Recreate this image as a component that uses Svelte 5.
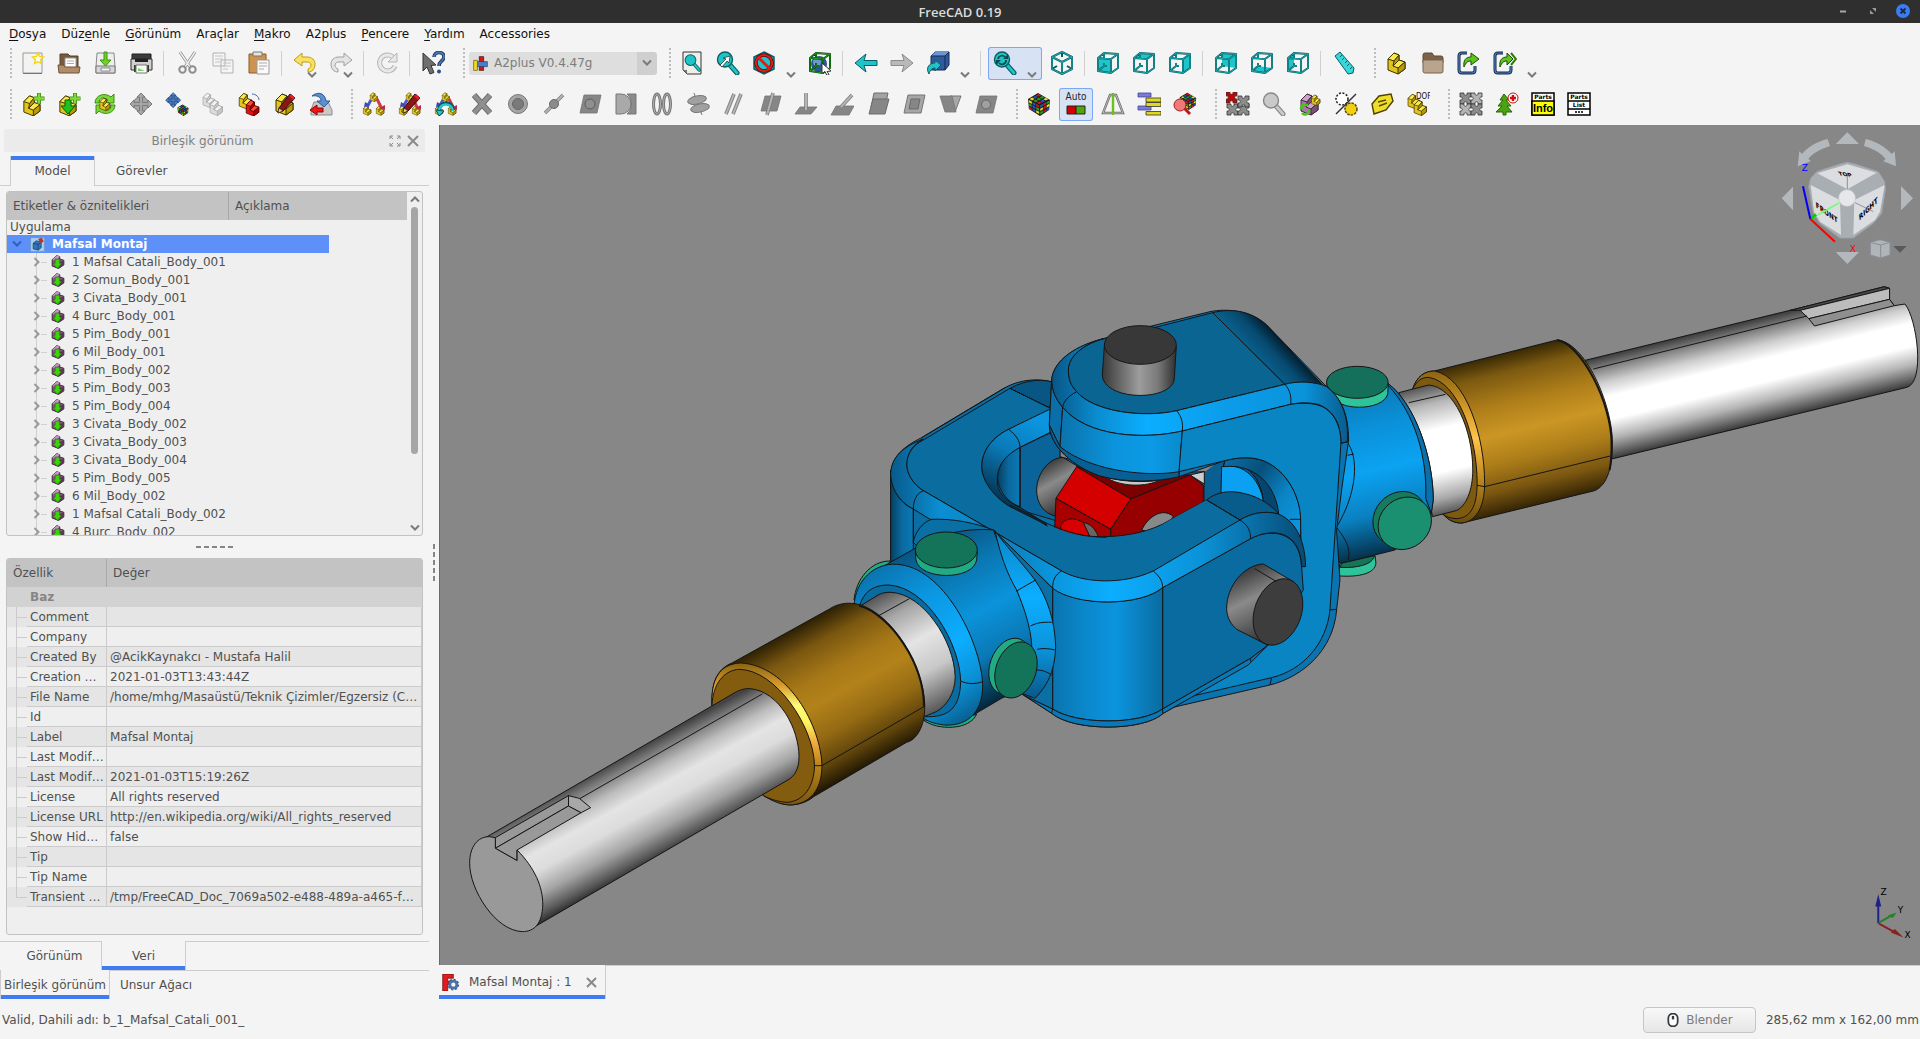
<script lang="ts">
	const teal = '#1fc4c8';
	const tealDark = '#0b5d61';

	function part(top: string, front: string, side: string, line = '#3a3300', transform = '') {
		return `<g transform="${transform}" stroke="${line}" stroke-linejoin="round">
			<path fill="${front}" d="M3 8l6-6 5 2v5l6 2v7l-7 5-10-4z"/>
			<path fill="${top}" d="M3 8l6-6 5 2-5 6zM8 15l6-6 6 2-7 6z"/>
			<path fill="${side}" d="M13 17l7-6v7l-7 5zM9 10l5-6v5l-6 6z"/></g>`;
	}

	const yellow = (t = '') => part('#fbe94a', '#e3c41c', '#b99a08', '#3a3300', t);
	const grey = (t = '') => part('#f2f2f2', '#dcdcdc', '#c8c8c8', '#a4a4a4', t);
	const red = (t = '') => part('#ff4a3a', '#e01010', '#b00000', '#4a0000', t);

	const faces: Record<string, string> = {
		front: '2,7 15,8 15,22 2,20',
		top: '2,7 8,2 22,3 15,8',
		right: '15,8 22,3 22,17 15,22',
		rear: '8,2 22,3 22,17 8,15',
		bottom: '2,20 8,15 22,17 15,22',
		left: '2,7 8,2 8,15 2,20'
	};

	function cube(face: string, line = tealDark, light = teal) {
		const edges = 'M2 7l13 1v14L2 20zM2 7l6-5 14 1-7 5M22 3v14l-7 5M8 2v5M8 12v3l3 0M8 15l-6 5';
		return `<polygon points="${faces[face] ?? ''}" fill="${light}"/>
			<path d="${edges}" fill="none" stroke="${line}" stroke-width="2" stroke-linejoin="round"/>
			<path d="${edges}" fill="none" stroke="${light}" stroke-width=".7"/>`;
	}

	function lens(fill: string, line: string, transform = '') {
		return `<g transform="${transform}"><path d="M14 14l7 8" stroke="${line}" stroke-width="5" stroke-linecap="round"/>
			<path d="M14 14l7 8" stroke="${fill}" stroke-width="2.8" stroke-linecap="round"/>
			<circle cx="9" cy="8.500" r="7.500" fill="${fill}" stroke="${line}" stroke-width="1.400"/></g>`;
	}

	function rubik(transform = '') {
		const cols = ['#e8d820', '#1f55c4', '#d01818', '#2a9c22'];
		let s = `<g transform="${transform}"><path d="M11 1l12 7-1 10-9 6-11-7-1-10z" fill="#1b1b1b"/>`;
		for (let i = 0; i < 3; i++) {
			for (let j = 0; j < 3; j++) {
				const c = (k: number) => cols[(i * 5 + j * 3 + k + i * j) % 4];
				s += `<path fill="${c(0)}" d="M${1.8 + i * 3.7} ${8 + i * 1.9 + j * 3.2}l3 1.6v2.3l-3-1.6z"/>`;
				s += `<path fill="${c(1)}" d="M${13.2 + i * 3.2} ${13.3 - i * 1.7 + j * 3.4}l2.7-1.5v2.3l-2.7 1.6z"/>`;
				s += `<path fill="${c(2)}" d="M${11.5 + i * 3.6 - j * 3.2} ${2 + i * 1.9 + j * 1.8}l2.6 1.4-2.6 1.4-2.5-1.4z"/>`;
			}
		}
		return s + '</g>';
	}

	const plane = (d: string) => `<path d="${d}" fill="#868686" stroke="#747474" stroke-width=".8"/>`;
	const rod = (d: string) =>
		`<path d="${d}" stroke="#7d7d7d" stroke-width="3.6" fill="none"/><path d="${d}" stroke="#b4b4b4" stroke-width="2" fill="none"/>`;
	const pencil = `<path d="M5 21l1-5L17 2l5 4-12 13z" fill="#8d1418" stroke="#2a0808"/><path d="M5 21l1-5 4 3z" fill="#e8cf90" stroke="#222" stroke-width=".6"/><path d="M16 4l4 4 2-2-4-4z" fill="#d22"/>`;
	const plus = `<path d="M18 1v11M12.500 6.500h11" stroke="#3f8f0c" stroke-width="4"/><path d="M18 1.500v10M13 6.500h10" stroke="#7fd938" stroke-width="2.400"/>`;
	const triad = `${yellow('translate(7 0) scale(.42)')}${yellow('translate(0 13) scale(.45)')}${yellow('translate(13 13) scale(.45)')}
		<path d="M9 8l-4 7" stroke="#5058c8" stroke-width="3"/><path d="M15 7l4 8" stroke="#cc3a4c" stroke-width="3"/><path d="M2 15l1-5 5 3z" fill="#4048b8"/><path d="M17 16l6-3v5z" fill="#b82c48"/>`;
	const movecross = (c: string, l: string) =>
		`<circle cx="12" cy="12" r="7.500" fill="${c}" stroke="${l}"/><path d="M12 1l4 4h-2.500v5.500H19V8l4 4-4 4v-2.500h-5.500V19H16l-4 4-4-4h2.500v-5.500H5V16l-4-4 4-4v2.500h5.500V5H8z" fill="${c}" stroke="${l}"/>`;
	const arrow = (c: string, l: string) =>
		`<path d="M1 12L12 3l-2 6.500h13v5H10l2 6.500z" fill="${c}" stroke="${l}" stroke-linejoin="round"/>`;
	const puzzle = (c: string, x: number, y: number) =>
		`<path transform="translate(${x} ${y})" d="M0 0h4c-1 3 4 3 3 0h4v4c-3-1-3 4 0 3v4H7c1-3-4-3-3 0H0V7c3 1 3-4 0-3z" fill="${c}" stroke="#333" stroke-width=".8"/>`;
	const exportBox = (x: number) =>
		`<path d="M10 2H5Q2 2 2 5v14q0 3 3 3h10q3 0 3-3v-4" fill="none" stroke="#14294a" stroke-width="3"/><path d="M10 2H5Q2 2 2 5v14q0 3 3 3h10q3 0 3-3v-4" fill="none" stroke="#4a7cc0" stroke-width="1.200"/>
		<path d="M7 16C6 9 9 6 14 6V2l${x} 6-${x} 6v-4c-3 0-5 1-7 6z" fill="#5cc41c" stroke="#1d4a05"/>`;

	const icons: Record<string, string> = {
		new: `<path d="M2 2h19v20H2z" fill="#f3f3f1" stroke="#9b9b98"/><path d="M2 22.500h19" stroke="#777" stroke-width="1"/><path d="M17 2l1.700 3.400 3.800.6-2.800 2.700.7 3.800L17 10.700l-3.400 1.800.7-3.800L11.500 6l3.800-.6z" fill="#fffde0" stroke="#f2d21a" stroke-width="1.400"/>`,
		open: `<path d="M3 3h8l2 2h8v12H3z" fill="#7a5a3c" stroke="#55402c"/><path d="M8 7h11v11H8z" fill="#fff" stroke="#999"/><path d="M10 10h7M10 12.500h7" stroke="#aaa"/><path d="M1 14h5l2 2h15l-1 6H2z" fill="#b08c68" stroke="#6e5238"/>`,
		save: `<path d="M4 2h17l1 14v6H3v-6z" fill="#eee" stroke="#888"/><path d="M3 15h19v7H3z" fill="#d8d8d8" stroke="#777"/><path d="M8 17h9v3H8z" fill="#f8f8f8" stroke="#888"/><path d="M11 1h3v8h4l-5.500 6L7 9h4z" fill="#6fd02a" stroke="#3f960a"/>`,
		print: `<path d="M3 3h19v5H3z" fill="#3c3c3c" stroke="#1d1d1d"/><path d="M2 8h21v11H2z" fill="#d0d0ce" stroke="#333"/><path d="M6 8h13v3H6z" fill="#222"/><path d="M5 14h15v7H5z" fill="#3a3a3a"/><path d="M7 14h11v8H7z" fill="#f8fff4" stroke="#777"/><path d="M9 17l7 3h-7z" fill="#7ccf62"/>`,
		cut: `<path d="M5 1l10 15M20 1L10 16" stroke="#8c8c8c" stroke-width="3"/><path d="M5 1l10 15M20 1L10 16" stroke="#efefef" stroke-width="1.400"/><circle cx="7.500" cy="18.500" r="3.200" fill="none" stroke="#8d8d8d" stroke-width="2"/><circle cx="17.500" cy="18.500" r="3.200" fill="none" stroke="#8d8d8d" stroke-width="2"/>`,
		copy: `<path d="M2 2h12v13H2zM10 9h12v13H10z" fill="#f5f5f5" stroke="#b2b2b2"/><path d="M4 5h8M4 8h8M4 11h5M12 12h8M12 15h8M12 18h5" stroke="#c4c4c4"/>`,
		paste: `<path d="M2 3h17v19H2z" fill="#cf9350" stroke="#8a5a22"/><path d="M6 1h9v4H6z" fill="#e4e4e2" stroke="#777"/><path d="M10 9h12v14H10z" fill="#fafafa" stroke="#999"/><path d="M12 12h8M12 15h8M12 18h5" stroke="#aaa"/>`,
		undo: `<path d="M1 9l8-7v4h5c5 0 8 3 8 7 0 5-3 8-7 8v-3c2-1 3-2 3-4s-2-3-4-3H9v4z" fill="#f7e264" stroke="#c49a0c"/>`,
		redo: `<path d="M23 9l-8-7v4h-5c-5 0-8 3-8 7 0 5 3 8 7 8v-3c-2-1-3-2-3-4s2-3 4-3h5v4z" fill="#e4e4e4" stroke="#9f9f9f"/>`,
		refresh: `<path d="M20 15a8 8 0 1 1-2-9" fill="none" stroke="#b5b5b5" stroke-width="5"/><path d="M20 15a8 8 0 1 1-2-9" fill="none" stroke="#e8e8e8" stroke-width="3"/><path d="M22 2v9h-9z" fill="#e8e8e8" stroke="#b5b5b5"/>`,
		whats: `<path d="M2 2l13 12-5 .5 3 7-4 1.500-3-7-4 4z" fill="#6d706d" stroke="#333"/><path d="M13 6c0-6 10-6 10 0 0 4-5 4-5 9" fill="none" stroke="#1c3557" stroke-width="3.600"/><path d="M13 6c0-6 10-6 10 0 0 4-5 4-5 9" fill="none" stroke="#4b78b5" stroke-width="1.800"/><circle cx="18" cy="20.500" r="2" fill="#2c4f80"/>`,
		fitall: `<path d="M3 1h18v22H7l-4-4z" fill="#efefea" stroke="#333"/><path d="M3 19h4v4z" fill="#777"/>${lens(teal, tealDark, 'translate(4 3) scale(.72)')}`,
		fitsel: `${lens(teal, tealDark)}<path d="M4 14l6-6-3-1 7-2-1 7-2-2-5 6z" fill="#fff" stroke="#222" stroke-width=".7"/>`,
		style: `<path d="M12 1l10 5v12l-10 5-10-5V6z" fill="${teal}" stroke="${tealDark}" stroke-width="1.500"/><circle cx="12" cy="12" r="8" fill="none" stroke="#5a0508" stroke-width="3.600"/><circle cx="12" cy="12" r="8" fill="none" stroke="#dd1c1c" stroke-width="2.200"/><path d="M6.500 6.500l11 11" stroke="#dd1c1c" stroke-width="3"/>`,
		bbox: `<circle cx="11" cy="13" r="8" fill="#2c5597"/><circle cx="9" cy="11" r="4" fill="#6d96d0"/>${cube('', '#063c06', '#26c426')}<path d="M14 12l9 8-4 .5 2 3-2 1-2-4-3 2z" fill="#fff" stroke="#333"/>`,
		back: arrow(teal, tealDark),
		fwd: `<g transform="translate(24 0) scale(-1 1)">${arrow('#b9b9b9', '#8b8b8b')}</g>`,
		linkview: `<path d="M5 5l4-4h14v13l-4 5H5z" fill="#2f5b9c" stroke="#142a50"/><path d="M5 5l4-4h14l-4 4z" fill="#6a96d4"/><path d="M5 5h14l4-4M19 5v14" stroke="#142a50" fill="none"/><path d="M3 23c-4-7 1-11 6-11V9l6 5-6 6v-3c-3 0-5 2-6 6z" fill="${teal}" stroke="${tealDark}"/>`,
		sync: `${lens(teal, tealDark)}<path d="M5 8a4 4 0 0 1 7-2M13 9a4 4 0 0 1-7 3" fill="none" stroke="#0b4c50" stroke-width="1.800"/><path d="M10 8h5V3zM8 9H3v5z" fill="#0b4c50"/>`,
		iso: `<path d="M12 1l10 5v12l-10 5-10-5V6zM2 6l10 5 10-5M12 11v12M12 1v5M2 18l5-3M22 18l-5-3" fill="none" stroke="${tealDark}" stroke-width="2" stroke-linejoin="round"/><path d="M12 1l10 5v12l-10 5-10-5V6zM2 6l10 5 10-5M12 11v12" fill="none" stroke="${teal}" stroke-width=".8"/>`,
		front: cube('front'),
		top: cube('top'),
		right: cube('right'),
		rear: cube('rear'),
		bottom: cube('bottom'),
		left: cube('left'),
		ruler: `<path d="M3 5l5-4 14 16-1 5-5 1z" fill="#36d8dc" stroke="${tealDark}"/><path d="M10 4l-2 2M12 7l-2 2M15 10l-2 2M17 13l-2 2M20 16l-2 2" stroke="${tealDark}"/>`,
		part: yellow(),
		group: `<path d="M2 4q0-2 2-2h7l2 3h7q2 0 2 2v5H2z" fill="#7b6248" stroke="#5d4a38"/><path d="M2 9h20v11q0 2-2 2H4q-2 0-2-2z" fill="#b9a58d" stroke="#766250"/>`,
		link: exportBox(8),
		links: `${exportBox(6)}<path d="M18 2l5 6-5 6" fill="none" stroke="#2f7a08" stroke-width="2"/>`,
		addpart: `${yellow('translate(0 2) scale(.95)')}${plus}`,
		importpart: `${yellow('translate(0 2) scale(.95)')}<path d="M8 8h6v6h4l-7 8-7-8h4z" fill="#1fc21a" stroke="#0a5c08"/>${plus}`,
		update: `<path d="M2 11C2 3 12 0 18 5l3-3v9h-9l3-3c-5-4-9-2-9 3z" fill="#7bd63a" stroke="#3f8f0c"/><path d="M22 13c0 8-10 11-16 6l-3 3v-9h9l-3 3c5 4 9 2 9-3z" fill="#7bd63a" stroke="#3f8f0c"/>${yellow('translate(5 5) scale(.6)')}`,
		move: movecross('#a6a6a6', '#7c7c7c'),
		movepart: `<g transform="scale(.68)">${movecross('#4d7fc4', '#1d3f78')}</g>${rubik('translate(12 12) scale(.5)')}`,
		dup: `${grey('scale(.68)')}${grey('translate(7 7) scale(.72)')}`,
		flip: `${yellow('scale(.74)')}${red('translate(7 7) scale(.74)')}<path d="M15 2c4 0 7 3 7 6" stroke="#4468a8" fill="none"/>`,
		edit: `${yellow('')}${pencil}`,
		convert: `<path d="M5 10h14l4 8v5H2v-5z" fill="#c9c9c9" stroke="#8c8c8c"/><path d="M3 4c6-5 13-3 14 5h4l-6 6-7-6h4c0-4-4-6-9-5z" fill="#5a8fd0" stroke="#2c5a94"/><path d="M1 18l7-5v3h6v4H8v3z" fill="#f01616" stroke="#8a0606"/>`,
		cons: triad,
		consedit: `${triad}${pencil}`,
		consredo: `${triad}<path d="M5 19c-1-9 13-11 14-1" fill="none" stroke="#08555c" stroke-width="4"/><path d="M5 20c-1-9 13-11 14-1" fill="none" stroke="#22c8d0" stroke-width="2.400"/><path d="M2 18l8 1-5 5z" fill="#22c8d0" stroke="#08555c"/>`,
		del: `<path d="M4 3l16 18M20 3L4 21" stroke="#6f6f6f" stroke-width="6"/><path d="M4 3l16 18M20 3L4 21" stroke="#8f8f8f" stroke-width="4"/>`,
		pt: `<circle cx="12" cy="12" r="9.500" fill="#a4a4a4" stroke="#787878"/><circle cx="12" cy="12" r="5.500" fill="#7a7a7a" stroke="#666"/>`,
		ptline: `${rod('M3 21L21 3')}<circle cx="12" cy="12" r="4.500" fill="#8c8c8c" stroke="#6a6a6a"/>`,
		ptplane: `${plane('M6 3h17l-4 18H2z')}<circle cx="12" cy="12" r="5" fill="#8f8f8f" stroke="#5c5c5c"/>`,
		sphere: `<path d="M2 2h5a10 10 0 0 1 0 20H2z" fill="#a9a9a9" stroke="#767676"/><path d="M13 2h9v20h-9c6-5 6-15 0-20z" fill="#8a8a8a" stroke="#767676"/>`,
		circ: `<ellipse cx="7" cy="12" rx="3.500" ry="10" fill="none" stroke="#767676" stroke-width="3"/><ellipse cx="17" cy="12" rx="3.500" ry="10" fill="none" stroke="#767676" stroke-width="3"/><ellipse cx="7" cy="12" rx="3.500" ry="10" fill="none" stroke="#b0b0b0"/><ellipse cx="17" cy="12" rx="3.500" ry="10" fill="none" stroke="#b0b0b0"/>`,
		coin: `<path d="M8 1l8 22" stroke="#777"/><ellipse cx="11" cy="8" rx="9.500" ry="4" fill="#a0a0a0" stroke="#777" transform="rotate(-12 11 8)"/><ellipse cx="14" cy="16" rx="9.500" ry="4" fill="#a0a0a0" stroke="#777" transform="rotate(-12 14 16)"/>`,
		axpar: `${rod('M4 22L12 2')}${rod('M11 22L19 2')}`,
		axplane: `${plane('M7 4h16l-4 15H3z')}${rod('M9 23L15 1')}`,
		axnormal: `${plane('M6 15h17l-6 7H1z')}${rod('M12 18V1')}`,
		axangle: `${plane('M6 14h18l-5 9H1z')}${rod('M11 15L22 3')}`,
		plpar: `<path d="M8 1h14l-3 14H5z" fill="#a2a2a2" stroke="#6c6c6c"/><path d="M7 7h16l-4 15H3z" fill="#868686" stroke="#6c6c6c"/>`,
		plcoin: `<path d="M6 3h17l-4 18H2z" fill="#a6a6a6" stroke="#747474"/><path d="M9 7h9l-2 10H7z" fill="#868686" stroke="#6a6a6a"/>`,
		plangle: `<path d="M12 4h11l-6 16z" fill="#a8a8a8" stroke="#757575"/>${plane('M2 4h12l4 16H7z')}`,
		center: `${plane('M6 4h17l-4 17H2z')}<circle cx="12" cy="12.500" r="4.500" fill="#a0a0a0" stroke="#646464"/>`,
		solve: rubik(),
		auto: `<text x="12" y="8" font-size="10" text-anchor="middle" font-family="DejaVu Sans Condensed, DejaVu Sans, sans-serif" fill="#222">Auto</text><path d="M3 14h9v8H3z" fill="#d40000" stroke="#222"/><path d="M12 14h9v8h-9z" fill="#4ea50c" stroke="#222"/>`,
		axis: `<path d="M9 3h6l7 18H2z" fill="none" stroke="#6b6b6b" stroke-width="2.400"/><path d="M9 3h6l7 18H2z" fill="none" stroke="#ddd" stroke-width=".7"/><path d="M12 1v22" stroke="#6cc118" stroke-width="2.400"/>`,
		list: `<path d="M1 1h13v4H1zM1 14h13v4H1z" fill="#7a7ad8" stroke="#44449a" stroke-width=".8"/><path d="M9 6h15v4H9zM9 10.500h15v4H9zM9 19.500h15V23H9z" fill="#dfd81c" stroke="#333" stroke-width=".8"/>`,
		solvefind: `${rubik('translate(6 0) scale(.75)')}<path d="M11 16l6 6" stroke="#c01818" stroke-width="3"/><circle cx="7" cy="13" r="6" fill="#f07878" stroke="#a02020"/>`,
		puzzlered: `${puzzle('#8b8d8a', 1, 12)}${puzzle('#8b8d8a', 12, 12)}${puzzle('#8b8d8a', 12, 4)}${puzzle('#b80808', 0, 0)}`,
		find: lens('#c9c9c9', '#888'),
		cubes: `${part('#c9a2c6', '#a77aa4', '#7c5279', '#43283f')}${yellow('translate(12 2) scale(.5)')}<path d="M3 17a4 4 0 0 1 7-3M11 18a4 4 0 0 1-7 3" fill="none" stroke="#49c41a" stroke-width="2.500"/>`,
		gears: `<circle cx="8" cy="7" r="6" fill="#fff" stroke="#222" stroke-dasharray="2 1.500" stroke-width="1.500"/><circle cx="17" cy="17" r="6" fill="#f0d010" stroke="#5a4a00" stroke-dasharray="2.500 1" stroke-width="1.500"/><path d="M2 22L22 2" stroke="#333" stroke-width="1.400"/>`,
		tag: `<path d="M2 12l7-8 12-2 2 7-7 9-12 4z" fill="#f0dc2c" stroke="#4c4200" stroke-width="1.400"/><path d="M8 10l8-2M9 14l8-3" stroke="#5a4c00" stroke-width="1.500"/>`,
		dof: `${yellow('translate(0 1) scale(.68)')}${yellow('translate(6 7) scale(.72)')}<text x="10" y="7" font-size="8" font-family="DejaVu Sans Condensed, DejaVu Sans, sans-serif" fill="#111">DOF</text>`,
		puzzlegrey: `${puzzle('#8d8d8d', 1, 1)}${puzzle('#b4b4b4', 12, 1)}${puzzle('#b4b4b4', 1, 12)}${puzzle('#8d8d8d', 12, 12)}`,
		treeplus: `<path d="M9 2l5 6h-3l5 6h-4l5 6h-6v3H8v-3H1l6-6H3l5-6H5z" fill="#4ca312" stroke="#2b6405"/><circle cx="18" cy="6" r="5" fill="#fff" stroke="#c01010"/><path d="M18 3v6M15 6h6" stroke="#d01010" stroke-width="2.400"/>`,
		info: `<path d="M1 1h22v22H1z" fill="#fff" stroke="#000" stroke-width="1.500"/><path d="M1 9h22v14H1z" fill="#ffff00" stroke="#000" stroke-width="1.500"/><text x="12" y="7" text-anchor="middle" font-size="6" font-weight="700" font-family="DejaVu Sans, sans-serif" fill="#000">Parts</text><text x="12" y="20" text-anchor="middle" font-size="11" font-weight="700" font-family="Liberation Sans, sans-serif" fill="#000">Info</text>`,
		plist: `<path d="M1 1h22v22H1zM1 9h22M1 17h22" fill="#fff" stroke="#000" stroke-width="1.500"/><text x="12" y="7" text-anchor="middle" font-size="6" font-weight="700" font-family="DejaVu Sans, sans-serif" fill="#000">Parts</text><text x="12" y="15" text-anchor="middle" font-size="6" font-weight="700" font-family="DejaVu Sans, sans-serif" fill="#000">List</text><path d="M8 20h2M11 20h2M14 20h2" stroke="#000" stroke-width="1.500"/>`,
		a2plus: `<path d="M10 1h7v22h-7z" fill="#d01818" stroke="#400"/><path d="M5 9h18v8H5z" fill="#4a7fc8" stroke="#1c3a6c"/><path d="M1 7h6v16H1z" fill="#f4d81c" stroke="#5a4a00"/>`,
		doc: `<path d="M1 1h22v22H1z" fill="#a9cdec" stroke="#6a93bb"/><path d="M5 10l5-4 8 2v9l-5 4-8-2z" fill="#2f74b8" stroke="#123a66"/><path d="M5 10l8 2v9M13 12l5-4" stroke="#123a66" fill="none"/><path d="M13 3l6-2 3 6-5 3z" fill="#c23030"/>`,
		body: `<path d="M2 8l8-7 5 2v4l7 2v8l-9 6-11-4z" fill="#8c5f86" stroke="#2c1929" stroke-width="1.500"/><path d="M2 8l8-7 5 2-6 6z" fill="#c397bd"/><path d="M15 12l7-3v8l-7 5z" fill="#5d3857"/><path d="M7 7h8v7h4l-8 9-8-9h4z" fill="#3ed20c" stroke="#135a04" stroke-width="1"/>`,
		fcad: `<path d="M1 0h15v6H8v4h6v5H8v9H1z" fill="#e01c1c" stroke="#6a0808"/><circle cx="16" cy="15" r="5" fill="#f4f4f4" stroke="#4a70a8" stroke-width="4"/><circle cx="16" cy="15" r="7.500" fill="none" stroke="#2c4c80" stroke-width="1.500" stroke-dasharray="3 2.800"/>`,
		mouse: `<rect x="4" y="1" width="16" height="22" rx="8" fill="#fff" stroke="#333a40" stroke-width="3"/><path d="M12 5v6" stroke="#333a40" stroke-width="4"/>`
	};

	type Item = { icon?: string; label?: string; kind?: 'sep' | 'handle' | 'combo'; drop?: boolean; mini?: boolean; active?: boolean };

	const sep: Item = { kind: 'sep' };
	const handle: Item = { kind: 'handle' };
	const many = (names: string): Item[] => names.split(' ').map((icon) => ({ icon, label: icon }));

	const rows: Item[][] = [
		[
			handle,
			...many('new open save print'),
			sep,
			...many('cut copy paste'),
			sep,
			{ icon: 'undo', label: 'undo', mini: true },
			{ icon: 'redo', label: 'redo', mini: true },
			sep,
			...many('refresh'),
			sep,
			...many('whats'),
			handle,
			{ kind: 'combo' },
			handle,
			...many('fitall fitsel'),
			{ icon: 'style', label: 'style', drop: true },
			...many('bbox'),
			sep,
			...many('back fwd'),
			{ icon: 'linkview', label: 'linkview', drop: true },
			sep,
			{ icon: 'sync', label: 'sync', drop: true, active: true },
			...many('iso'),
			sep,
			...many('front top right'),
			sep,
			...many('rear bottom left'),
			sep,
			...many('ruler'),
			handle,
			...many('part group link'),
			{ icon: 'links', label: 'links', drop: true }
		],
		[
			handle,
			...many('addpart importpart update move movepart dup flip edit convert'),
			handle,
			...many('cons consedit consredo del pt ptline ptplane sphere circ coin axpar axplane axnormal axangle plpar plcoin plangle center'),
			handle,
			...many('solve'),
			{ icon: 'auto', label: 'auto', active: true },
			...many('axis list solvefind'),
			handle,
			...many('puzzlered find cubes gears tag dof'),
			handle,
			...many('puzzlegrey treeplus info plist')
		]
	];

	const menus = [
		['', 'D', 'osya'],
		['Düz', 'e', 'nle'],
		['', 'G', 'örünüm'],
		['Araçlar', '', ''],
		['', 'M', 'akro'],
		['A2plus', '', ''],
		['', 'P', 'encere'],
		['', 'Y', 'ardım'],
		['Accessories', '', '']
	];

	const bodies = [
		'1 Mafsal Catali_Body_001',
		'2 Somun_Body_001',
		'3 Civata_Body_001',
		'4 Burc_Body_001',
		'5 Pim_Body_001',
		'6 Mil_Body_001',
		'5 Pim_Body_002',
		'5 Pim_Body_003',
		'5 Pim_Body_004',
		'3 Civata_Body_002',
		'3 Civata_Body_003',
		'3 Civata_Body_004',
		'5 Pim_Body_005',
		'6 Mil_Body_002',
		'1 Mafsal Catali_Body_002',
		'4 Burc_Body_002'
	];

	// names and values are already elided to the column widths
	const props = [
		['Comment', ''],
		['Company', ''],
		['Created By', '@AcikKaynakcı - Mustafa Halil'],
		['Creation …', '2021-01-03T13:43:44Z'],
		['File Name', '/home/mhg/Masaüstü/Teknik Çizimler/Egzersiz (C…'],
		['Id', ''],
		['Label', 'Mafsal Montaj'],
		['Last Modif…', ''],
		['Last Modif…', '2021-01-03T15:19:26Z'],
		['License', 'All rights reserved'],
		['License URL', 'http://en.wikipedia.org/wiki/All_rights_reserved'],
		['Show Hid…', 'false'],
		['Tip', ''],
		['Tip Name', ''],
		['Transient …', '/tmp/FreeCAD_Doc_7069a502-e488-489a-a465-f…']
	];
</script>

{#snippet glyph(name: string, size: number)}
	<svg class="glyph" width={size} height={size} viewBox="0 0 24 24" fill="none" aria-hidden="true">{@html icons[name]}</svg>
{/snippet}

{#snippet chevron(dir: string)}
	<svg class="chevron {dir}" width="10" height="8" viewBox="0 0 10 8" aria-hidden="true">
		<path d="M1 1.500l4 4 4-4" fill="none" stroke="currentColor" stroke-width="2" />
	</svg>
{/snippet}

<div class="window">
	<header class="titlebar">
		<span class="title">FreeCAD 0.19</span>
		<div class="controls">
			<button aria-label="minimize"><svg width="14" height="14"><path d="M4 7.500h6" stroke="#a8a8a8" stroke-width="2" /></svg></button>
			<button aria-label="restore"><svg width="14" height="14"><path d="M6 4h4v4zM4 6v4h4z" fill="#9a9a9a" /></svg></button>
			<button aria-label="close"><svg width="14" height="14"><circle cx="7" cy="7" r="7" fill="#3b7bf5" /><path d="M4.500 4.500l5 5M9.500 4.500l-5 5" stroke="#1d2b45" stroke-width="2" /></svg></button>
		</div>
	</header>

	<nav class="menubar">
		{#each menus as [before, key, after]}
			<button>{before}<u>{key}</u>{after}</button>
		{/each}
	</nav>

	<div class="toolbars">
		{#each rows as row}
			<div class="toolbar">
				{#each row as item}
					{#if item.kind === 'handle'}
						<span class="handle"></span>
					{:else if item.kind === 'sep'}
						<span class="sep"></span>
					{:else if item.kind === 'combo'}
						<div class="combo">
							{@render glyph('a2plus', 15)}
							<select aria-label="Workbench"><option>A2plus V0.4.47g</option></select>
							<span class="combo-arrow">{@render chevron('down')}</span>
						</div>
					{:else}
						<button class="tool" class:drop={item.drop} class:active={item.active} aria-label={item.label}>
							{@render glyph(item.icon ?? '', 24)}
							{#if item.drop || item.mini}
								<span class="more">{@render chevron('down')}</span>
							{/if}
						</button>
					{/if}
				{/each}
			</div>
		{/each}
	</div>

	<main class="work">
		<aside class="dock">
			<div class="dock-title">
				<span>Birleşik görünüm</span>
				<button aria-label="float">
					<svg width="12" height="12" viewBox="0 0 12 12"><path d="M1 4V1h3M8 1h3v3M11 8v3H8M4 11H1V8M1 1l3 3M11 1L8 4M11 11L8 8M1 11l3-3" fill="none" stroke="#8c8c8c" /></svg>
				</button>
				<button aria-label="close panel">
					<svg width="12" height="12" viewBox="0 0 12 12"><path d="M1 1l10 10M11 1L1 11" stroke="#8a8a8a" stroke-width="2" /></svg>
				</button>
			</div>

			<div class="tabs top">
				<button class="current">Model</button>
				<button>Görevler</button>
			</div>

			<section class="tree">
				<div class="tree-main">
					<div class="tree-head">
						<span>Etiketler &amp; öznitelikleri</span>
						<span>Açıklama</span>
					</div>
					<div class="tree-root">Uygulama</div>
					<div class="tree-doc">
						{@render chevron('down')}
						{@render glyph('doc', 15)}
						<b>Mafsal Montaj</b>
					</div>
					<ul>
						{#each bodies as body}
							<li>
								{@render chevron('side')}
								{@render glyph('body', 14)}
								<span>{body}</span>
							</li>
						{/each}
					</ul>
				</div>
				<div class="scroll">
					{@render chevron('up')}
					<div class="track"><div class="thumb"></div></div>
					{@render chevron('down')}
				</div>
			</section>

			<div class="splitter"></div>

			<section class="props">
				<table>
					<colgroup><col class="c-branch" /><col class="c-name" /><col /></colgroup>
					<thead>
						<tr><th colspan="2">Özellik</th><th>Değer</th></tr>
					</thead>
					<tbody>
						<tr class="group"><td></td><td colspan="2">Baz</td></tr>
						{#each props as [name, value]}
							<tr>
								<td class="branch"></td>
								<td class="name">{name}</td>
								<td class="value">{value}</td>
							</tr>
						{/each}
					</tbody>
				</table>
			</section>

			<div class="tabs bottom">
				<button class="wide">Görünüm</button>
				<button class="current mid">Veri</button>
			</div>
			<div class="tabs bottom last">
				<button class="current">Birleşik görünüm</button>
				<button>Unsur Ağacı</button>
			</div>
		</aside>

		<div class="v-splitter"></div>

		<section class="mdi">
			<div class="viewport">
				<svg class="model" viewBox="440 125 1480 840" aria-label="Mafsal Montaj">
					<defs>
						<linearGradient id="shaftR" gradientUnits="userSpaceOnUse" x1="1000" y1="190" x2="1084" y2="482">
							<stop offset="0" stop-color="#3a3a3a" /><stop offset=".12" stop-color="#858585" /><stop offset=".26" stop-color="#cfcfcf" /><stop offset=".4" stop-color="#fff" />
							<stop offset=".62" stop-color="#fff" /><stop offset=".8" stop-color="#b4b4b4" /><stop offset=".93" stop-color="#666" /><stop offset="1" stop-color="#3a3a3a" />
						</linearGradient>
						<linearGradient id="neckR" gradientUnits="userSpaceOnUse" x1="290" y1="355" x2="395" y2="722">
							<stop offset="0" stop-color="#555" /><stop offset=".15" stop-color="#b8b8b8" /><stop offset=".35" stop-color="#fff" /><stop offset=".68" stop-color="#fff" /><stop offset=".88" stop-color="#aaa" /><stop offset="1" stop-color="#5a5a5a" />
						</linearGradient>
						<linearGradient id="collarR" gradientUnits="userSpaceOnUse" x1="500" y1="256" x2="627" y2="696">
							<stop offset="0" stop-color="#3a2a05" /><stop offset=".12" stop-color="#7d5a10" /><stop offset=".32" stop-color="#b07f1a" /><stop offset=".5" stop-color="#cb9624" />
							<stop offset=".68" stop-color="#ad7e19" /><stop offset=".86" stop-color="#7a5610" /><stop offset="1" stop-color="#352505" />
						</linearGradient>
						<linearGradient id="rimR" gradientUnits="userSpaceOnUse" x1="0" y1="300" x2="0" y2="760">
							<stop offset="0" stop-color="#8a6210" /><stop offset=".25" stop-color="#d59a28" /><stop offset=".45" stop-color="#ffc24c" /><stop offset=".7" stop-color="#c08a1e" /><stop offset="1" stop-color="#6a4a0c" />
						</linearGradient>
						<linearGradient id="hubR" gradientUnits="userSpaceOnUse" x1="150" y1="340" x2="290" y2="842">
							<stop offset="0" stop-color="#0a75b0" /><stop offset=".25" stop-color="#0a90d8" /><stop offset=".5" stop-color="#0ba3f2" /><stop offset=".75" stop-color="#0a80c0" /><stop offset="1" stop-color="#04283e" />
						</linearGradient>
						<linearGradient id="wallL" x1="0" x2="1" y1="0" y2="0">
							<stop offset="0" stop-color="#06405f" /><stop offset=".5" stop-color="#0a69a0" /><stop offset="1" stop-color="#0a79b5" />
						</linearGradient>
						<linearGradient id="front" gradientUnits="userSpaceOnUse" x1="578" y1="0" x2="908" y2="0">
							<stop offset="0" stop-color="#0a74af" /><stop offset=".3" stop-color="#0a88cb" /><stop offset=".58" stop-color="#0b94de" /><stop offset=".85" stop-color="#0a7ab6" /><stop offset="1" stop-color="#0a6ba0" />
						</linearGradient>
						<linearGradient id="arm" gradientUnits="userSpaceOnUse" x1="600" y1="0" x2="967" y2="0">
							<stop offset="0" stop-color="#0a72ac" /><stop offset=".45" stop-color="#0b94dc" /><stop offset=".75" stop-color="#0b9ae6" /><stop offset="1" stop-color="#0a8acb" />
						</linearGradient>
						<linearGradient id="armRim" gradientUnits="userSpaceOnUse" x1="575" y1="0" x2="1466" y2="0">
							<stop offset="0" stop-color="#085584" /><stop offset=".15" stop-color="#0a8cd0" /><stop offset=".32" stop-color="#0caeff" /><stop offset=".6" stop-color="#0b9be8" /><stop offset=".85" stop-color="#0a93da" /><stop offset="1" stop-color="#085b8c" />
						</linearGradient>
						<linearGradient id="slant" gradientUnits="userSpaceOnUse" x1="1150" y1="185" x2="1230" y2="110">
							<stop offset="0" stop-color="#0a6897" /><stop offset=".6" stop-color="#074a70" /><stop offset="1" stop-color="#031c2c" />
						</linearGradient>
						<linearGradient id="ringRim" gradientUnits="userSpaceOnUse" x1="92" y1="0" x2="1337" y2="0">
							<stop offset="0" stop-color="#085a8a" /><stop offset=".12" stop-color="#0b8ed2" /><stop offset=".3" stop-color="#0a84c4" /><stop offset=".53" stop-color="#0caeff" /><stop offset=".75" stop-color="#0b92d8" /><stop offset="1" stop-color="#074a72" />
						</linearGradient>
						<linearGradient id="inner" gradientUnits="userSpaceOnUse" x1="520" y1="390" x2="400" y2="620">
							<stop offset="0" stop-color="#0b95de" /><stop offset=".45" stop-color="#0a7ab8" /><stop offset="1" stop-color="#053552" />
						</linearGradient>
						<linearGradient id="window" gradientUnits="userSpaceOnUse" x1="1090" y1="520" x2="1322" y2="690">
							<stop offset="0" stop-color="#0a6ea6" /><stop offset=".35" stop-color="#074f7a" /><stop offset=".7" stop-color="#0a84c4" /><stop offset="1" stop-color="#0b95de" />
						</linearGradient>
						<linearGradient id="hubL" gradientUnits="userSpaceOnUse" x1="230" y1="735" x2="473" y2="1200">
							<stop offset="0" stop-color="#085480" /><stop offset=".25" stop-color="#0a78b4" /><stop offset=".5" stop-color="#0b93da" /><stop offset=".75" stop-color="#0a78b4" /><stop offset="1" stop-color="#04283e" />
						</linearGradient>
						<linearGradient id="rimL" gradientUnits="userSpaceOnUse" x1="20" y1="830" x2="340" y2="1300">
							<stop offset="0" stop-color="#0a6fa8" /><stop offset=".3" stop-color="#0b96e0" /><stop offset=".6" stop-color="#0caeff" /><stop offset=".8" stop-color="#0b90d4" /><stop offset="1" stop-color="#085684" />
						</linearGradient>
						<linearGradient id="neckFillet" gradientUnits="userSpaceOnUse" x1="0" y1="722" x2="0" y2="1225">
							<stop offset="0" stop-color="#0a84c6" /><stop offset=".4" stop-color="#0caeff" /><stop offset=".7" stop-color="#0b94dc" /><stop offset="1" stop-color="#08588a" />
						</linearGradient>
						<linearGradient id="pinV" x1="0" x2="1" y1="0" y2="0">
							<stop offset="0" stop-color="#383838" /><stop offset=".5" stop-color="#9c9c9c" /><stop offset=".75" stop-color="#7a7a7a" /><stop offset="1" stop-color="#2e2e2e" />
						</linearGradient>
						<linearGradient id="pinH" x1=".3" x2=".7" y1="0" y2="1">
							<stop offset="0" stop-color="#2e2e2e" /><stop offset=".4" stop-color="#8a8a8a" /><stop offset=".6" stop-color="#6a6a6a" /><stop offset="1" stop-color="#222" />
						</linearGradient>
						<linearGradient id="neckL" gradientUnits="userSpaceOnUse" x1="1100" y1="172" x2="1300" y2="482">
							<stop offset="0" stop-color="#555" /><stop offset=".2" stop-color="#a8a8a8" /><stop offset=".45" stop-color="#e4e4e4" /><stop offset=".7" stop-color="#c8c8c8" /><stop offset="1" stop-color="#5a5a5a" />
						</linearGradient>
						<linearGradient id="collarL" gradientUnits="userSpaceOnUse" x1="860" y1="290" x2="1101" y2="663">
							<stop offset="0" stop-color="#2e2104" /><stop offset=".15" stop-color="#7a5710" /><stop offset=".35" stop-color="#a77817" /><stop offset=".5" stop-color="#b3821a" />
							<stop offset=".7" stop-color="#946a13" /><stop offset=".88" stop-color="#5e430b" /><stop offset="1" stop-color="#231903" />
						</linearGradient>
						<linearGradient id="rimC" gradientUnits="userSpaceOnUse" x1="0" y1="368" x2="0" y2="795">
							<stop offset="0" stop-color="#8a6210" /><stop offset=".16" stop-color="#d89c2c" /><stop offset=".3" stop-color="#fffa78" /><stop offset=".42" stop-color="#fff45c" /><stop offset=".56" stop-color="#f2ab3c" /><stop offset=".72" stop-color="#b98418" /><stop offset="1" stop-color="#7a5610" />
						</linearGradient>
						<linearGradient id="shaftL" gradientUnits="userSpaceOnUse" x1="430" y1="672" x2="596" y2="930">
							<stop offset="0" stop-color="#444" /><stop offset=".1" stop-color="#7a7a7a" /><stop offset=".25" stop-color="#bcbcbc" /><stop offset=".4" stop-color="#e4e4e4" />
							<stop offset=".56" stop-color="#dcdcdc" /><stop offset=".76" stop-color="#a4a4a4" /><stop offset=".92" stop-color="#5a5a5a" /><stop offset="1" stop-color="#2e2e2e" />
						</linearGradient>
					</defs>

					<!-- rear shaft, collar and hub -->
					<g transform="translate(1300 270) scale(.3954 .3333)">
						<path fill="url(#shaftR)" d="M690 280 1260 115 1478 50 1491 55V88L1503 107 1530 102C1560 145 1582 335 1535 352L750 578Z" />
						<path fill="#4a4a4a" d="M1240 121 1478 50 1491 55 1265 121Z" />
						<path fill="#bcbcbc" d="M1265 121 1491 55V88L1287 146Z" />
						<path fill="#8f8f8f" d="M1287 146 1491 88 1503 107 1301 168Z" />
						<path class="ln" d="M742 297 1282 138" />
						<path fill="url(#collarR)" d="M285 357C295 320 315 303 340 303L650 210C720 215 790 400 790 520 790 620 765 660 735 665L410 759C390 760 375 750 362 733Z" />
						<path class="ln heavy" d="M650 210C712 222 788 400 788 520 788 560 786 585 783 600" />
						<path fill="url(#rimR)" d="M285 357C295 320 315 303 340 303 420 320 467 500 467 640 467 720 440 755 410 759 390 760 375 750 362 733Z" />
						<path fill="#7d5a10" d="M285 357C295 335 305 322 325 322 400 335 448 500 448 640 448 720 425 745 395 746 380 745 370 740 362 733Z" />
						<path class="ln" d="M448 646 467 650 785 558" />
						<path fill="url(#neckR)" d="M250 368 325 345C390 350 437 480 437 600 437 660 420 710 395 722L335 740 300 500Z" />
						<path class="ln" d="M275 398 368 373" />
						<path fill="url(#hubR)" d="M40 350 222 340C290 400 337 560 337 690L330 745 240 840 105 880 60 860Z" />
						<path fill="#0a70ab" d="M222 340C290 400 337 560 337 690L332 730 318 685C322 560 290 430 222 345Z" />
						<path class="ln" d="M118 515C150 560 145 670 92 772 110 800 130 830 122 870M120 556 136 552" />
						<path fill="#2fc39a" d="M67 340 78 372C90 425 210 425 222 372L223 340Z" />
						<ellipse fill="#14705a" cx="145" cy="337" rx="78" ry="48" />
						<ellipse fill="#157a5e" cx="252" cy="745" rx="66" ry="82" transform="rotate(18 252 745)" />
						<ellipse fill="#1a9070" cx="265" cy="760" rx="66" ry="80" transform="rotate(18 265 760)" />
						<path fill="#2fc39a" d="M100 882 190 857 192 880C190 910 150 922 100 918Z" />
						<path fill="#167558" d="M105 880 188 857C185 885 140 895 102 892Z" />
					</g>

					<!-- joint: two forks around the red block -->
					<g transform="translate(860 290) scale(.3333)">
						<path fill="#0a6da3" d="M92 555C95 500 130 470 185 443L435 293C480 268 540 262 590 280L600 500 1040 625 1110 604C1230 610 1330 700 1337 830L1330 900 1210 1075 1165 1125 910 1270C850 1325 640 1325 575 1270L490 1215 300 1000 92 810Z" />
						<path fill="url(#wallL)" d="M92 540C92 600 120 640 160 657V860L92 815Z" />
						<path fill="#0a6499" d="M480 472 600 415V560L1035 545V640L750 740 480 660Z" />
						<path fill="url(#wallL)" d="M480 472V650C420 630 400 560 420 530 430 505 450 488 480 472Z" />
						<path fill="url(#pinH)" d="M530 600C530 550 570 500 610 503L655 530 590 680C550 670 530 640 530 600Z" />
						<path fill="#ccc" d="M990 555 1033 545V582Z" />
						<path fill="#7d0000" d="M650 530 720 545 990 555 812 627Z" />
						<path fill="#c8c8c8" d="M735 560C780 592 860 592 900 570L870 560Z" />
						<path fill="#d40000" d="M650 530 812 627 752 718 588 625Z" />
						<path fill="#960000" d="M812 627 990 555 1030 585V640L860 740H752V718Z" />
						<path fill="#a80000" d="M588 625 752 718V745L583 740Z" />
						<path fill="#d80000" d="M602 710C612 675 670 675 712 740H602Z" />
						<path fill="#666" d="M670 698C690 700 705 715 715 740H690Z" />
						<path fill="#888" d="M845 720C870 670 915 655 940 680L900 735Z" />

						<path fill="url(#inner)" d="M575 350 445 418C400 440 365 480 365 530 365 570 400 625 450 650L580 715 480 652C430 630 410 600 412 570 412 530 430 500 480 472L575 425Z" />
						<path fill="#0b6c9f" d="M140 525C140 490 160 465 190 450L450 295 575 355 445 418C400 440 365 480 365 530 365 570 400 620 450 650L540 695C620 752 820 760 930 690L1040 630 1140 690 880 843C790 885 670 880 605 843L190 602C160 585 140 550 140 525Z" />
						<path fill="#085683" d="M450 295C500 268 550 265 590 280V355L562 350Z" />

						<!-- vertical fork -->
						<path fill="#0a5f92" d="M1035 545 1095 500H1210L1335 690V860L1110 640 1035 630Z" stroke="none" />
						<path fill="#0ca0f2" d="M1085 530C1150 515 1210 570 1213 660L1110 620 1083 610Z" />
						<path fill="#06466e" d="M1150 528C1200 540 1255 590 1257 680L1213 655C1208 590 1190 555 1150 528Z" />
						<path fill="url(#window)" d="M1095 510C1130 500 1170 498 1210 510 1280 540 1324 620 1324 690V760L1257 680C1250 580 1180 520 1090 530Z" />
						<path fill="#0a74b0" d="M575 270C580 210 650 165 735 145L875 108 1050 65C1100 55 1170 60 1220 105L1400 290C1450 330 1465 380 1466 450L1445 600 1430 720 1440 870 1430 960C1420 1080 1330 1160 1230 1185L940 1252 1170 1100 1320 850 1322 690C1322 620 1280 540 1210 512 1170 498 1130 503 1095 512L957 560C880 580 800 580 720 558 640 530 570 470 568 405Z" />
						<path fill="#0a6592" d="M625 240C625 190 690 155 735 145L875 115 1058 68 1275 283 950 362C850 385 700 365 650 305 630 285 625 265 625 240Z" />
						<path fill="url(#slant)" d="M1058 68C1110 55 1170 60 1220 105L1390 287C1350 272 1310 275 1275 283Z" />
						<path fill="url(#armRim)" d="M735 145C690 155 625 190 625 240 625 265 630 285 650 305 700 365 850 385 950 362L1275 283C1310 272 1370 275 1400 290 1455 330 1466 400 1462 455L1443 460C1443 400 1420 360 1375 343 1345 337 1320 337 1292 343L967 423C850 450 680 440 608 352 585 325 575 300 575 270 580 210 650 165 735 145Z" />
						<path fill="#0a6ea8" d="M575 270C575 300 585 325 608 352L600 470 568 405Z" />
						<path fill="url(#arm)" d="M608 352C680 440 850 450 967 423L957 556C880 580 700 560 600 470Z" />
						<path fill="#085f94" d="M568 405C570 470 640 530 720 558 800 580 900 575 957 560V545C880 560 700 550 600 470Z" />
						<path fill="#0a85c4" d="M967 423 1292 343C1345 335 1380 343 1400 358 1430 380 1443 420 1443 460L1410 960C1400 1060 1330 1140 1235 1163L990 1220 1170 1105 1325 880 1322 690C1322 620 1280 540 1210 512 1170 498 1130 503 1095 512L957 545Z" />
						<path class="ln" d="M650 305C625 318 610 335 608 352M950 362C965 380 970 400 967 423M1275 283C1290 300 1295 320 1292 343M1095 512 1090 530M1290 688H1322M1443 460 1466 455M1410 960 1430 958M1235 1163 1230 1185" />
						<path fill="url(#pinV)" d="M733 170 727 255C730 335 940 335 943 265L949 170Z" />
						<ellipse fill="#383838" cx="841" cy="165" rx="108" ry="58" />

						<!-- horizontal fork, front arm -->
						<path fill="#0b6c9f" d="M740 742C820 742 880 725 930 690L1040 630 1140 690 880 843C790 885 670 880 605 843L560 700C620 735 680 742 740 742Z" stroke="none" />
						<path fill="#085c8c" d="M1040 630C1070 605 1110 600 1150 610 1200 620 1240 650 1255 672 1210 660 1170 672 1140 690Z" />
						<path fill="#0a6ba0" d="M908 893 1172 746C1230 715 1320 720 1325 830L1330 900 1225 1065 1172 1105 908 1257Z" />
						<path fill="url(#front)" d="M578 893C650 950 840 950 908 893V1257C840 1305 650 1305 578 1257Z" />
						<path fill="#0a78b6" d="M578 1257C650 1305 840 1305 908 1257L1172 1105 1225 1065 1165 1125 910 1270C850 1325 640 1325 575 1270L490 1215Z" />
						<path fill="url(#ringRim)" d="M190 447C130 470 92 500 92 555 95 605 125 640 160 657L210 688 400 720 578 895C650 950 840 950 908 893L1172 746C1230 715 1320 715 1325 830L1337 830C1335 740 1300 690 1255 672 1210 660 1170 672 1140 690L880 843C790 885 670 880 605 843L190 602C160 585 140 550 140 525 140 490 160 462 190 447Z" />
						<path class="ln" d="M190 602C170 610 160 630 160 657V760M605 843C585 855 578 870 578 895M880 843C900 860 908 875 908 893M1140 690C1165 705 1172 725 1172 746M1040 630 1140 690M450 295 565 352M445 418C470 435 480 455 480 472V650M435 293 185 443M740 742C680 742 620 730 540 690L450 645M578 1257 575 1270M908 1257V1270M1172 1105V1115" />
						<path fill="#0a6fa5" d="M160 757C165 725 190 695 215 688 280 685 350 700 400 720L578 895V1257L490 1215 300 900Z" />
						<path fill="url(#pinH)" d="M1210 822C1150 825 1100 890 1100 955 1100 985 1115 1005 1130 1018L1220 1064 1300 875Z" />
						<ellipse fill="#3d3d3d" cx="1254" cy="966" rx="70" ry="103" transform="rotate(20 1254 966)" />
						<path class="ln" d="M1184 836 1250 875" />

						<!-- front hub -->
						<path fill="#22aa85" d="M-18 930C-12 870 30 812 92 813L60 850Z" />
						<path fill="#22aa85" d="M190 1290C230 1322 330 1322 350 1272L300 1290Z" />
						<path fill="url(#hubL)" d="M60 835 165 775C250 720 350 715 400 720L470 900C520 1020 560 1100 500 1190L425 1225 340 1275 250 1290Z" />
						<path fill="url(#neckFillet)" d="M405 722C420 790 440 850 470 900 520 1020 535 1110 485 1210L525 1225C570 1180 585 1130 587 1070 585 990 560 920 525 870 480 810 430 760 405 722Z" />
						<path class="ln" d="M470 903 527 870M512 1008C530 998 550 996 575 997M532 1078C550 1074 570 1076 585 1080M530 1140C548 1140 562 1146 575 1155" />
						<path fill="url(#rimL)" d="M-18 950C-15 870 45 818 110 823 250 830 360 1050 368 1180 370 1280 310 1310 250 1305 220 1300 200 1295 188 1280Z" />
						<path fill="#0a6ba0" d="M-2 950C10 905 40 885 85 885 200 890 300 1060 302 1175 300 1250 270 1285 190 1280Z" />
						<path class="ln" d="M302 1173C320 1182 345 1184 368 1175" />
						<path fill="#22aa85" d="M166 785 168 810C180 872 340 872 350 810L352 785Z" />
						<ellipse fill="#14745a" cx="259" cy="780" rx="93" ry="54" />
						<ellipse fill="#22aa85" cx="450" cy="1129" rx="60" ry="87" transform="rotate(20 450 1129)" />
						<ellipse fill="#14745a" cx="468" cy="1140" rx="60" ry="87" transform="rotate(20 468 1140)" />
					</g>

					<!-- front collar and shaft -->
					<g transform="translate(440 540) scale(.3954 .3333)">
						<path fill="url(#neckL)" d="M1060 200 1108 165C1120 157 1130 157 1140 157 1220 160 1300 300 1303 410 1303 460 1280 500 1255 515L1225 530 1100 225Z" />
						<path class="ln" d="M1108 228 1187 176" />
						<path fill="url(#collarL)" d="M688 497C685 420 705 385 740 368L985 207C1000 195 1020 188 1040 190 1130 195 1225 370 1226 500 1226 560 1205 600 1180 607L945 770C920 795 885 800 860 790L818 767Z" />
						<path class="ln heavy" d="M1060 197C1140 225 1224 370 1224 500" />
						<path fill="url(#rimC)" d="M688 497C685 420 705 372 760 369 880 375 965 560 966 680 965 750 935 793 885 795 860 793 840 783 818 767Z" />
						<path fill="#835c10" d="M688 495C690 430 720 390 757 388 850 390 945 560 947 675 947 740 920 782 880 787 860 787 835 778 818 767Z" />
						<path class="ln" d="M947 677H966L1224 500" />
						<path fill="url(#shaftL)" d="M115 893 750 455C765 447 775 445 785 446 860 455 908 570 908 650 908 690 895 710 880 720L240 1160 120 1000Z" />
						<path class="ln" d="M352 777 815 462" />
						<path fill="#999" d="M140 893 325 767V798L140 925Z" />
						<path fill="#999" d="M140 925 325 798 357 818 195 930V962Z" />
						<path fill="#a8a8a8" d="M325 767 352 775 381 803 357 818 325 798Z" />
						<path fill="#999" d="M140 893V925L195 962V930C240 985 260 1040 260 1095 258 1150 240 1175 208 1175 140 1172 75 1050 75 970 75 920 95 890 125 890Z" />
					</g>
				</svg>

				<svg class="navcube" width="180" height="155" viewBox="0 15 540 465" aria-label="Navigation cube">
					<g fill="#b3b8bc">
						<path d="M322 37 357 72H287ZM322 432 287 396H357ZM125 235 159 200V271ZM519 235 483 198V271Z" />
						<path d="M263 57 270 78C235 90 215 102 205 117L213 123 173 139 178 94 186 102C205 80 230 65 263 57ZM377 57 372 78C405 88 425 102 437 117L430 124 468 139 464 94 455 102C435 80 410 65 377 57Z" />
					</g>
					<path fill="#a9aeb3" stroke="#9ca1a6" stroke-width="3" d="M322 127 345 132 415 155 434 185 436 210 425 280 400 310 340 354H300L240 310 220 280 206 200 212 175 230 155 300 132Z" />
					<path fill="#dcdde0" d="M322 133 410 158 322 208 232 160ZM212 195 300 240 303 345 240 305 222 275ZM434 195 343 240 340 345 405 300 420 275Z" />
					<path stroke="#8d9195" stroke-width="3" d="M322 160V210M345 248 400 275" />
					<circle cx="321" cy="234" r="25" fill="#e6e7ea" stroke="#c8cacc" stroke-width="2" />
					<g font-family="DejaVu Sans, sans-serif" font-weight="700" fill="#000">
						<text transform="matrix(.75 .55 .1 1 228 262)" font-size="23">FRONT</text>
						<text transform="matrix(.7 -.7 .1 1 358 302)" font-size="23">RIGHT</text>
						<text transform="matrix(.8 .1 .3 .7 298 166)" font-size="22">TOP</text>
					</g>
					<path d="M211 297 298 248" stroke="#7cfa7c" stroke-width="5" />
					<path d="M211 297 228 284" stroke="#0c0" stroke-width="8" />
					<path d="M189 199 211 297" stroke="#00f" stroke-width="6" />
					<path d="M211 297 285 365" stroke="#f00" stroke-width="6" />
					<text x="185" y="153" font-size="27" font-family="DejaVu Sans, sans-serif" fill="#00f">Z</text>
					<text x="329" y="397" font-size="27" font-family="DejaVu Sans, sans-serif" fill="#f00">X</text>
					<path fill="#b0b5ba" stroke="#8a8f94" stroke-width="3" d="M391 367 420 359 450 367V405L422 414 391 405Z" />
					<path fill="none" stroke="#8a8f94" stroke-width="3" d="M391 367 422 375 450 367M422 375V414" />
					<path fill="#5a5a5a" d="M460 378H500L480 398Z" />
				</svg>

				<svg class="axes" width="53" height="85" viewBox="740 0 160 255" aria-label="Axis cross">
					<path d="M774 130V60" stroke="#20208a" stroke-width="6" />
					<path d="M774 42 783 79H765Z" fill="#20208a" />
					<path d="M776 128 815 106" stroke="#1f861f" stroke-width="6" />
					<path d="M829 97 818 114 803 106Z" fill="#1f861f" />
					<path d="M776 131 830 160" stroke="#8a2020" stroke-width="6" />
					<path d="M850 173 812 158 824 147Z" fill="#8a2020" />
					<g font-size="27" font-family="DejaVu Sans, sans-serif" fill="#000">
						<text x="781" y="45">Z</text>
						<text x="833" y="99">Y</text>
						<text x="853" y="174">X</text>
					</g>
				</svg>
			</div>

			<div class="doc-tabs">
				<div class="doc-tab">
					{@render glyph('fcad', 17)}
					<span>Mafsal Montaj : 1</span>
					<button aria-label="close document">
						<svg width="11" height="11" viewBox="0 0 11 11"><path d="M1 1l9 9M10 1l-9 9" stroke="#8a8a8a" stroke-width="2" /></svg>
					</button>
				</div>
			</div>
		</section>
	</main>

	<footer class="status">
		<span class="message">Valid, Dahili adı: b_1_Mafsal_Catali_001_</span>
		<button class="nav-style">{@render glyph('mouse', 14)}Blender</button>
		<span>285,62 mm x 162,00 mm</span>
	</footer>
</div>

<style>
	:global(body) {
		margin: 0;
		background: #f4f4f4;
	}

	.window {
		display: flex;
		flex-direction: column;
		min-height: 100vh;
		box-sizing: border-box;
		overflow: hidden;
		border-bottom: 1px solid #2f2f2f;
		font: 12px/18px 'DejaVu Sans', sans-serif;
		color: #505050;
	}

	button {
		margin: 0;
		padding: 0;
		border: 0;
		background: none;
		font: inherit;
		color: inherit;
	}

	svg {
		display: block;
		flex: none;
	}

	/* title and menu */
	.titlebar {
		position: relative;
		display: flex;
		align-items: center;
		justify-content: center;
		height: 23px;
		background: #2f2f2f;
	}

	.title {
		font: 600 13px/24px 'Open Sans', sans-serif;
		color: #dcdcdc;
	}

	.controls {
		position: absolute;
		top: 4px;
		right: 10px;
		display: flex;
		gap: 16px;
	}

	.menubar {
		display: flex;
		gap: 15px;
		height: 22px;
		padding-left: 9px;
		color: #111;
	}

	.menubar button {
		line-height: 22px;
	}

	.menubar u {
		text-underline-offset: 2px;
	}

	/* toolbars */
	.toolbars {
		display: flex;
		flex-direction: column;
		gap: 5px;
		padding-bottom: 3px;
	}

	.toolbar {
		display: flex;
		align-items: center;
		height: 36px;
	}

	.handle {
		width: 6px;
		height: 30px;
		margin: 0 1px 0 10px;
		background: conic-gradient(#bdbdbd 25%, transparent 0 75%, transparent 0) 0 0 / 4px 4px;
	}

	.handle:first-child {
		margin-left: 8px;
	}

	.sep {
		width: 1px;
		height: 25px;
		margin: 0 5px 0 4px;
		background: #d0d0d0;
	}

	.tool {
		position: relative;
		display: flex;
		align-items: center;
		flex: none;
		width: 34px;
		height: 33px;
		margin: 0 1px;
		padding-left: 5px;
		box-sizing: border-box;
		border-radius: 3px;
	}

	.tool.drop {
		width: 54px;
	}

	.tool.active {
		margin: 0 2px;
		background: #d8e2f5;
		box-shadow: inset 0 0 0 1px #7ba7f7;
	}

	.more {
		position: absolute;
		right: 5px;
		bottom: 1px;
		color: #7a7a7a;
	}

	.combo {
		display: flex;
		align-items: center;
		position: relative;
		width: 188px;
		height: 23px;
		margin-left: 1px;
		border-radius: 3px;
		background: linear-gradient(90deg, #dedede 168px, #cfcfcf 0);
	}

	.combo :global(.glyph) {
		position: absolute;
		left: 4px;
	}

	.combo select {
		width: 100%;
		height: 100%;
		padding: 0 20px 0 25px;
		border: 0;
		appearance: none;
		background: none;
		font: inherit;
		color: #7c7c7c;
	}

	.combo-arrow {
		position: absolute;
		right: 5px;
		color: #7a7a7a;
	}

	.chevron.up {
		transform: rotate(180deg);
	}

	.chevron.side {
		transform: rotate(-90deg);
	}

	/* dock */
	.work {
		display: flex;
		flex: 1;
	}

	.dock {
		display: flex;
		flex-direction: column;
		width: 429px;
	}

	.dock-title {
		display: flex;
		align-items: center;
		gap: 6px;
		height: 23px;
		margin: 4px 4px;
		padding-right: 6px;
		border-radius: 2px;
		background: #ebebeb;
		color: #808080;
	}

	.dock-title span {
		flex: 1;
		padding-left: 18px;
		text-align: center;
	}

	.tabs {
		display: flex;
		height: 29px;
		border-bottom: 1px solid #cdcdcd;
	}

	.tabs button {
		padding: 0 21px;
	}

	.tabs.top {
		padding-left: 10px;
	}

	.tabs.top .current {
		width: 85px;
		margin-bottom: -1px;
		border: solid #cdcdcd;
		border-width: 0 1px;
		background: linear-gradient(#3f7cf3 4px, #f4f4f4 0);
	}

	.tabs.bottom {
		border-bottom: 0;
		border-top: 1px solid #cdcdcd;
		height: 28px;
	}

	.tabs.bottom .current {
		margin-top: -1px;
		border: solid #cdcdcd;
		border-width: 0 1px;
		background: linear-gradient(0deg, #3f7cf3 4px, #f4f4f4 0);
	}

	.tabs .wide {
		width: 101px;
		padding: 0 0 0 8px;
	}

	.tabs .mid {
		width: 85px;
	}

	.tabs.last button {
		padding: 0 10px;
	}

	.tabs.last .current {
		padding: 0 3px;
	}

	.tree,
	.props {
		margin: 0 6px;
		border: 1px solid #c2c2c2;
		border-radius: 3px;
		background: #efefef;
		overflow: hidden;
	}

	.tree {
		display: flex;
		flex: 343 1 0;
		margin-top: 5px;
		min-height: 0;
	}

	.tree-main {
		flex: 1;
		height: 0;
		min-height: 100%;
		overflow: hidden;
	}

	.tree-head {
		display: flex;
		background: #c3c3c3;
		line-height: 28px;
	}

	.tree-head span {
		padding-left: 6px;
	}

	.tree-head span:first-child {
		width: 215px;
		border-right: 1px solid #a9a9a9;
	}

	.tree-root {
		padding-left: 3px;
		line-height: 15px;
	}

	.tree-doc {
		display: flex;
		align-items: center;
		gap: 7px;
		width: 317px;
		height: 18px;
		padding-left: 5px;
		background: #5e90fa;
		color: #fff;
	}

	.tree-doc :global(.chevron) {
		margin-right: 1px;
		color: #2e5fc0;
	}

	ul {
		margin: 0 0 0 29px;
		padding: 0;
		list-style: none;
		background: linear-gradient(#d0d0d0, #d0d0d0) no-repeat 0 0 / 1px 100%;
	}

	li {
		display: flex;
		align-items: center;
		height: 18px;
		background: linear-gradient(#d0d0d0, #d0d0d0) no-repeat 5px 9px / 6px 1px;
	}

	li :global(.chevron) {
		margin-left: -4px;
		color: #999;
	}

	li :global(.glyph) {
		margin: 0 7px 0 9px;
	}

	.scroll {
		display: flex;
		flex-direction: column;
		align-items: center;
		gap: 4px;
		width: 15px;
		padding: 3px 0;
		color: #7a7a7a;
	}

	.track {
		flex: 1;
	}

	.thumb {
		width: 7px;
		height: 79%;
		border-radius: 4px;
		background: #a6a6a6;
	}

	.splitter {
		width: 37px;
		height: 2px;
		margin: 10px auto;
		background: repeating-linear-gradient(90deg, #858585 0 5px, transparent 0 8px);
	}

	.v-splitter {
		align-self: center;
		width: 2px;
		height: 37px;
		margin: 0 4px;
		background: repeating-linear-gradient(#858585 0 5px, transparent 0 8px);
	}

	/* properties */
	.props {
		flex: 375 1 0;
		margin-bottom: 6px;
	}

	table {
		width: 100%;
		table-layout: fixed;
		border-collapse: separate;
		border-spacing: 0;
	}

	.c-branch {
		width: 20px;
	}

	.c-name {
		width: 80px;
	}

	th {
		height: 28px;
		padding: 0 6px;
		background: #c3c3c3;
		text-align: left;
		font-weight: 400;
	}

	th:first-child {
		border-right: 1px solid #a9a9a9;
	}

	td {
		height: 20px;
		box-sizing: border-box;
		padding: 0 0 0 3px;
		overflow: hidden;
		white-space: nowrap;
	}

	.group td {
		background: #d2d2d2;
		font-weight: 700;
		color: #858585;
	}

	tbody tr:nth-child(even) {
		background: #e5e5e5;
	}

	.branch {
		background:
			linear-gradient(#cbcbcb, #cbcbcb) no-repeat 9px 0 / 1px 100%,
			linear-gradient(#cbcbcb, #cbcbcb) no-repeat 9px 10px / 11px 1px;
	}

	tr:last-child .branch {
		background-size:
			1px 10px,
			11px 1px;
	}

	.name,
	.value {
		border-right: 1px solid #cbcbcb;
		border-bottom: 1px solid #cbcbcb;
	}

	/* document area */
	.mdi {
		display: flex;
		flex: 1;
		flex-direction: column;
		min-width: 0;
	}

	.viewport {
		position: relative;
		flex: 1;
		border-left: 1px solid #6a6a6a;
		background: #878787;
	}

	.model {
		width: 100%;
		height: 100%;
		stroke: #161616;
		stroke-linejoin: round;
	}

	.model :is(path, ellipse) {
		vector-effect: non-scaling-stroke;
	}

	.model .ln {
		fill: none;
	}

	.model .heavy {
		stroke-width: 2px;
	}

	.navcube {
		position: absolute;
		top: 0;
		right: 0;
	}

	.axes {
		position: absolute;
		right: 0;
		bottom: 0;
	}

	.doc-tabs {
		display: flex;
		height: 33px;
		border-top: 1px solid #cdcdcd;
	}

	.doc-tab {
		display: flex;
		align-items: center;
		margin-top: -1px;
		padding: 0 8px 0 3px;
		border-right: 1px solid #cdcdcd;
		background: linear-gradient(0deg, #3f7cf3 4px, #f4f4f4 0);
	}

	.doc-tab span {
		margin: 0 14px 0 10px;
	}

	/* status bar */
	.status {
		display: flex;
		align-items: center;
		gap: 10px;
		height: 38px;
		padding: 2px 1px 0 2px;
		white-space: nowrap;
	}

	.message {
		flex: 1;
	}

	.nav-style {
		display: flex;
		align-items: center;
		justify-content: center;
		gap: 6px;
		width: 113px;
		height: 26px;
		border: 1px solid #c6c6c6;
		border-radius: 4px;
		background: linear-gradient(#f8f8f8, #e6e6e6);
		color: #7a7a7a;
	}
</style>
